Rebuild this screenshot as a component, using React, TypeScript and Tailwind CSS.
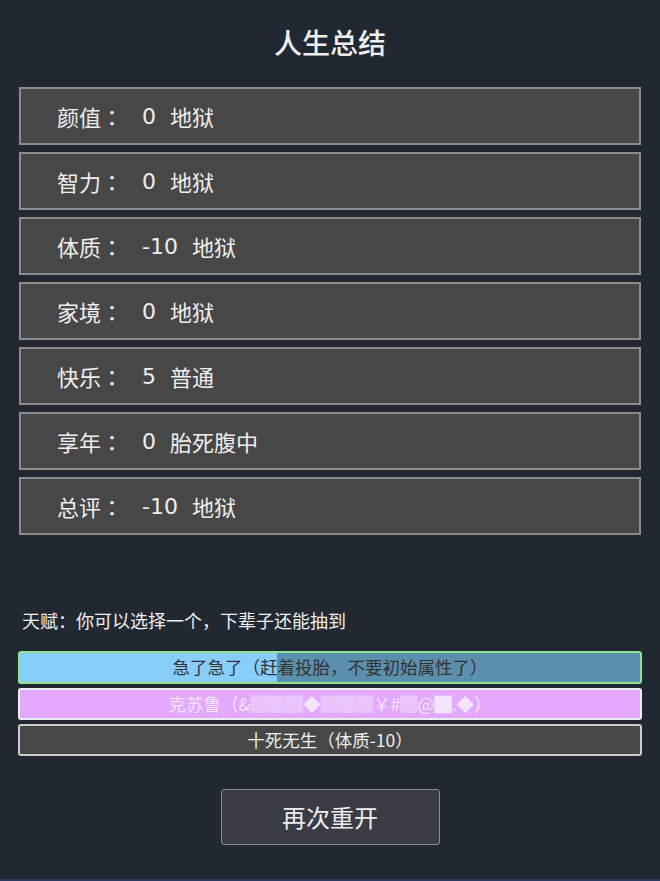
const rows: [string, string, string][] = [
  ["颜值", "0", "地狱"],
  ["智力", "0", "地狱"],
  ["体质", "-10", "地狱"],
  ["家境", "0", "地狱"],
  ["快乐", "5", "普通"],
  ["享年", "0", "胎死腹中"],
  ["总评", "-10", "地狱"],
];

export default function App() {
  return (
    <div
      className="flex min-h-[881px] flex-col border-b-2 border-[#2b3a5c] bg-[#222831] text-[#eeeeee]"
      style={{ fontFamily: '"Noto Sans CJK SC", "Noto Sans", sans-serif' }}
    >
      <h1 className="pt-[22px] text-center text-[28px] leading-[40px] font-medium">人生总结</h1>

      <div className="mx-[19px] mt-[25px] flex flex-col gap-[7px]">
        {rows.map(([k, v, g]) => (
          <div
            key={k}
            className="flex h-[58px] items-center border-2 border-[#8c8c8c] bg-[#474747] pl-[36px] text-[22px]"
          >
            <span>{k}</span>
            <span className="font-['Noto_Sans_CJK_TC',sans-serif]">：</span>
            <span className="ml-[19px] font-['DejaVu_Sans',sans-serif]">{v}</span>
            <span className="ml-[14px]">{g}</span>
          </div>
        ))}
      </div>

      <p className="mt-[73px] ml-[22px] text-[18px] leading-[24px]">天赋：你可以选择一个，下辈子还能抽到</p>

      <div className="mx-[18px] mt-[19px] flex flex-col gap-[4px] text-[17.5px]">
        <div className="flex h-[33px] items-center justify-center rounded-[3px] border-2 border-[#90e090] bg-[linear-gradient(to_right,#87cefa_257px,#5b8fae_257px)] text-[#333333]">
          急了急了（赶着投胎，不要初始属性了）
        </div>
        <div className="flex h-[32px] items-center justify-center rounded-[3px] border-2 border-[#eeeeee] bg-[#e2a9ff] text-[#f3e4fb]">
          克苏鲁（&amp;▓▓▓◆▓▓▓￥#▓@█.◆）
        </div>
        <div className="flex h-[32px] items-center justify-center rounded-[3px] border-2 border-[#cccccc] bg-[#474747] text-[#eeeeee]">
          十死无生（体质-10）
        </div>
      </div>

      <div className="mt-[33px] flex justify-center">
        <button className="h-[56px] w-[219px] rounded-[3px] border border-[#8c8c8c] bg-[#393c45] text-[24px] text-[#eeeeee]">
          再次重开
        </button>
      </div>
    </div>
  );
}
